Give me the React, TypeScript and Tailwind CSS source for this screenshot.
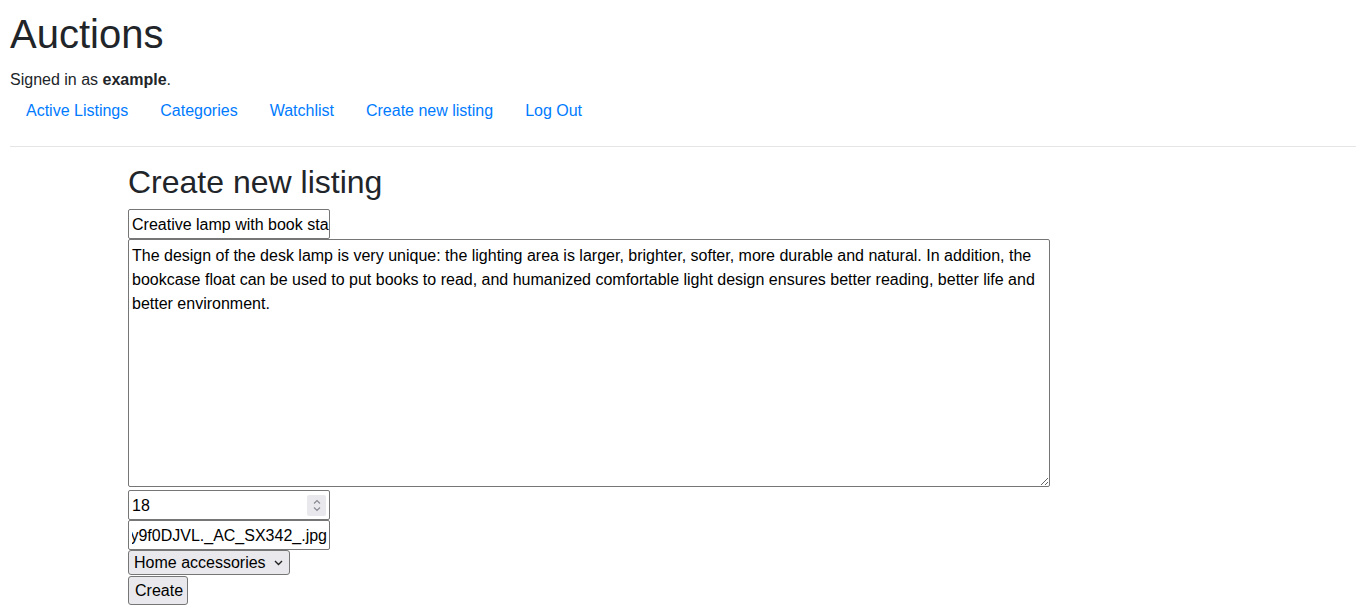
const navLinks = ["Active Listings", "Categories", "Watchlist", "Create new listing", "Log Out"];

const description =
  "The design of the desk lamp is very unique: the lighting area is larger, brighter, softer, more durable and natural. In addition, the bookcase float can be used to put books to read, and humanized comfortable light design ensures better reading, better life and better environment.";

const App = () => {
  return (
    <div className="min-h-screen bg-white p-[10px] text-base leading-6 text-[#212529]" style={{ fontFamily: '"Liberation Sans", Arial, sans-serif' }}>
      {/* Header */}
      <h1 className="mb-[10px] text-[40px] leading-[48px] font-normal">Auctions</h1>
      <div>
        Signed in as <strong className="font-bold">example</strong>.
      </div>
      <ul className="-mt-[1px] flex">
        {navLinks.map((link) => (
          <li key={link}>
            <a href="#" className="block px-4 py-2 text-[#007bff]">
              {link}
            </a>
          </li>
        ))}
      </ul>
      <hr className="mt-[15px] mb-4 border-t border-[rgba(0,0,0,0.1)]" />

      {/* Form */}
      <div className="mx-auto w-[1140px] px-[15px]">
        <h2 className="mb-2 text-[32px] leading-[38px] font-normal">Create new listing</h2>
        <div className="flex flex-col items-start text-black">
          <div className="flex h-[30px] w-[202px] items-center overflow-hidden whitespace-nowrap rounded-[2px] border border-[#767676] px-[3px] pt-[2px]">
            Creative lamp with book stand
          </div>
          <textarea
            readOnly
            defaultValue={description}
            className="block h-[248px] w-[922px] rounded-[2px] border border-[#767676] px-[3px] pt-[4px] text-base leading-6 text-black outline-none"
            style={{ fontFamily: '"Liberation Sans", Arial, sans-serif' }}
          />
          <div className="mt-[3px] flex h-[30px] w-[202px] items-center justify-between rounded-[2px] border border-[#767676] pl-[3px] pr-[3px]">
            <span className="pt-[2px]">18</span>
            <span className="flex h-[21px] w-[19px] items-center justify-center rounded-[2px] bg-[#e9e9ed]">
              <svg width="10" height="15" viewBox="0 0 10 15" fill="none" stroke="#8a8a96" strokeWidth="1.2">
                <path d="M2 5.5 L5 2.5 L8 5.5" />
                <path d="M2 9.5 L5 12.5 L8 9.5" />
              </svg>
            </span>
          </div>
          <div className="h-[30px] w-[202px] rounded-[2px] border border-[#767676] pl-[3px] pr-[2px] pt-[2px]">
            <div className="flex h-full items-center justify-end overflow-hidden whitespace-nowrap">
              https://m.media-amazon.com/images/I/61Xy9f0DJVL._AC_SX342_.jpg
            </div>
          </div>
          <div className="flex h-[25px] w-[162px] items-center justify-between rounded-[3px] border border-[#767676] bg-[#e9e9ed] pl-[5px] pr-[6px]">
            <span>Home accessories</span>
            <svg width="9" height="6" viewBox="0 0 9 6" fill="none" stroke="#222" strokeWidth="1.4">
              <path d="M1 1 L4.5 4.5 L8 1" />
            </svg>
          </div>
          <button className="mt-[1px] h-[29px] w-[60px] rounded-[3px] border border-[#767676] bg-[#e9e9ed] px-[6px] text-black">
            Create
          </button>
        </div>
      </div>
    </div>
  );
};

export default App;
